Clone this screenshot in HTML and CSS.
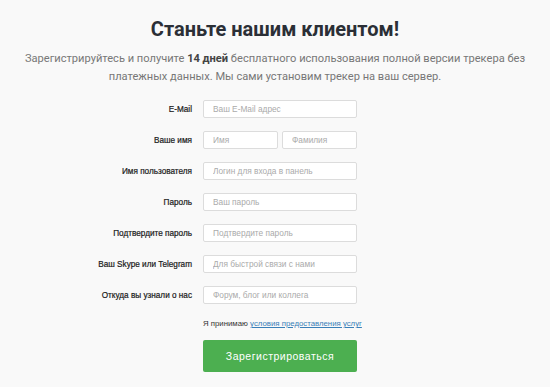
FILE: index.html
```html
<!DOCTYPE html>
<html lang="ru">
<head>
    <meta charset="UTF-8">
    <meta name="viewport" content="width=device-width, initial-scale=1.0">
    <title>Регистрация</title>
    <link rel="stylesheet" href="styles.css">
</head>
<body>
    <div class="signup">
        <h1>Станьте нашим клиентом!</h1>
        <p class="lead">
            Зарегистрируйтесь и получите <b>14 дней</b> бесплатного использования полной версии трекера без<br>
            платежных данных. Мы сами установим трекер на ваш сервер.
        </p>

        <form class="signup-form" onsubmit="return false">
            <label class="field-label" for="email">E-Mail</label>
            <input class="field" id="email" type="email" placeholder="Ваш E-Mail адрес">

            <label class="field-label" for="firstName">Ваше имя</label>
            <div class="field-pair">
                <input class="field" id="firstName" type="text" placeholder="Имя">
                <input class="field" id="lastName" type="text" placeholder="Фамилия">
            </div>

            <label class="field-label" for="login">Имя пользователя</label>
            <input class="field" id="login" type="text" placeholder="Логин для входа в панель">

            <label class="field-label" for="password">Пароль</label>
            <input class="field" id="password" type="password" placeholder="Ваш пароль">

            <label class="field-label" for="password2">Подтвердите пароль</label>
            <input class="field" id="password2" type="password" placeholder="Подтвердите пароль">

            <label class="field-label" for="contact">Ваш Skype или Telegram</label>
            <input class="field" id="contact" type="text" placeholder="Для быстрой связи с нами">

            <label class="field-label" for="source">Откуда вы узнали о нас</label>
            <input class="field" id="source" type="text" placeholder="Форум, блог или коллега">

            <p class="terms">Я принимаю <a href="#">условия предоставления услуг</a></p>

            <button class="submit-btn" type="submit">Зарегистрироваться</button>
        </form>
    </div>
</body>
</html>
```

FILE: styles.css
```css
body {
    margin: 0;
    background-color: #f9f9f9;
    font-family: Roboto, 'Liberation Sans', Arial, sans-serif;
    color: #333;
}
.signup {
    padding-top: 14px;
    text-align: center;
}
h1 {
    margin: 0;
    font-size: 20px;
    line-height: 30px;
    font-weight: 700;
    color: #2b2f36;
}
.lead {
    margin: 6px 0 0;
    white-space: nowrap;
    font-size: 11.1px;
    line-height: 18px;
    color: #777;
}
.lead b {
    color: #444;
}
.signup-form {
    width: 340px;
    margin: 14px auto 0;
    display: grid;
    grid-template-columns: 87px 154px;
    column-gap: 11px;
    row-gap: 13px;
    align-items: center;
    text-align: left;
}
.field-label {
    justify-self: end;
    white-space: nowrap;
    font-family: 'Liberation Sans', Arial, sans-serif;
    font-size: 8.2px;
    color: #1a1a1a;
    -webkit-text-stroke: 0.2px #1a1a1a;
}
.field {
    box-sizing: border-box;
    width: 100%;
    height: 18px;
    margin: 0;
    padding: 0 9px;
    border: 1px solid #dcdcdc;
    border-radius: 2px;
    background: #fff;
    font-family: 'Liberation Sans', Arial, sans-serif;
    font-size: 8.3px;
    color: #555;
}
.field::placeholder {
    color: #aaa;
}
.field-pair {
    display: flex;
    gap: 4px;
}
.terms {
    grid-column: 2;
    margin: 2px 0 0;
    white-space: nowrap;
    font-family: 'Liberation Sans', Arial, sans-serif;
    font-size: 7.8px;
    color: #333;
}
.terms a {
    color: #3a7fb8;
}
.submit-btn {
    grid-column: 2;
    margin-top: -1px;
    height: 32px;
    border: none;
    border-radius: 2px;
    background-color: #4caf50;
    color: #fff;
    font-family: 'Liberation Sans', Arial, sans-serif;
    font-size: 10.5px;
    letter-spacing: 0.5px;
    cursor: pointer;
}
```
